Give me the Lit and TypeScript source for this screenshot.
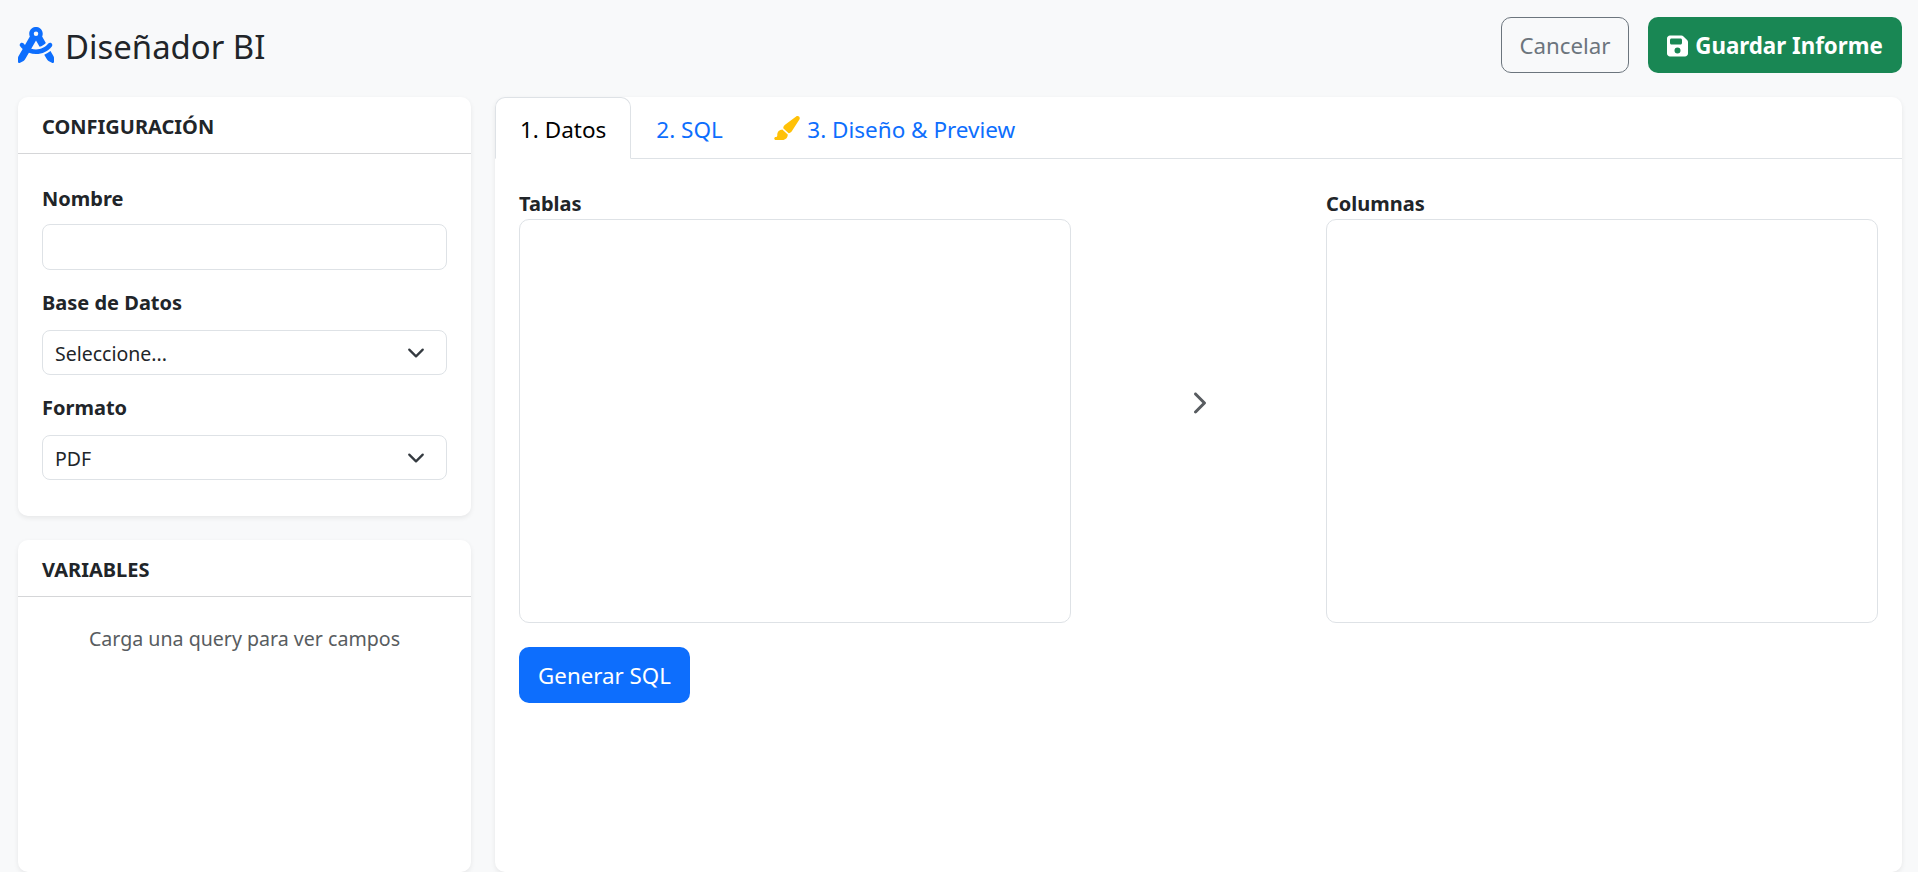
import { LitElement, css, html } from 'lit';
import { customElement } from 'lit/decorators.js';

const logoIcon = html`<svg class="logo" viewBox="0 0 512 512" fill="currentColor"><path d="M352 96c0 14.3-3.1 27.9-8.7 40.2L396 227.4c-23.7 25.3-54.2 44.1-88.5 53.6L256 192h0 0l-68 117.5c21.5 6.8 44.3 10.5 68.1 10.5c70.7 0 133.8-32.7 174.9-84c11.1-13.8 31.2-16 45-5s16 31.2 5 45C428.1 341.8 347 384 256 384c-35.4 0-69.4-6.4-100.7-18.1L98.7 463.7C94 471.8 87 478.4 78.6 482.6L23.2 510.3c-5 2.5-10.9 2.2-15.6-.7S0 501.5 0 496V440.6c0-8.4 2.2-16.7 6.5-24.1l60-103.7C53.6 301.3 41.8 288.6 31 275c-11.1-13.8-8.8-33.9 5-45s33.9-8.8 45 5c5.7 7.1 11.8 13.8 18.2 20.1l69.4-119.9c-5.6-12.2-8.8-25.8-8.8-40.2c0-53 43-96 96-96s96 43 96 96zm21 297.9c32.6-12.8 62.5-30.8 88.9-52.9l43.7 75.5c4.2 7.3 6.5 15.6 6.5 24.1V496c0 5.5-2.9 10.7-7.6 13.6s-10.6 3.2-15.6 .7l-55.4-27.7c-8.4-4.2-15.4-10.8-20.1-18.9L373 393.9zM256 128a32 32 0 1 0 0-64 32 32 0 1 0 0 64z"/></svg>`;

const saveIcon = html`<svg class="save" viewBox="0 0 448 512" fill="currentColor"><path d="M64 32C28.7 32 0 60.7 0 96V416c0 35.3 28.7 64 64 64H384c35.3 0 64-28.7 64-64V173.3c0-17-6.7-33.3-18.7-45.3L352 50.7C340 38.7 323.7 32 306.7 32H64zm0 96c0-17.7 14.3-32 32-32H288c17.7 0 32 14.3 32 32v64c0 17.7-14.3 32-32 32H96c-17.7 0-32-14.3-32-32V128zM224 288a64 64 0 1 1 0 128 64 64 0 1 1 0-128z"/></svg>`;

const brushIcon = html`<svg class="brush" viewBox="32 0 544 512" fill="currentColor"><path d="M339.3 367.1c27.3-3.9 51.9-19.4 67.2-42.9L568.2 74.1c12.6-19.5 9.4-45.3-7.6-61.2S517.7-4.4 499.1 9.6L262.4 187.2c-24 18-38.2 46.1-38.4 76.1L339.3 367.1zm-19.6 25.4l-116-104.4C143.9 290.3 96 339.6 96 400c0 3.9 .2 7.8 .6 11.6C98.4 429.1 86.4 448 68.8 448H64c-17.7 0-32 14.3-32 32s14.3 32 32 32H208c61.9 0 112-50.1 112-112c0-2.5-.1-5-.2-7.5z"/></svg>`;

const chevronIcon = html`<svg class="chevron" viewBox="0 0 320 512" fill="currentColor"><path d="M310.6 233.4c12.5 12.5 12.5 32.8 0 45.3l-192 192c-12.5 12.5-32.8 12.5-45.3 0s-12.5-32.8 0-45.3L242.7 256 73.4 86.6c-12.5-12.5-12.5-32.8 0-45.3s32.8-12.5 45.3 0l192 192z"/></svg>`;

const caret = html`<svg class="caret" viewBox="0 0 16 16" fill="none" stroke="#343a40" stroke-linecap="round" stroke-linejoin="round" stroke-width="2"><path d="m2 5 6 6 6-6"/></svg>`;

@customElement('app-root')
export class AppRoot extends LitElement {
  static styles = css`
    :host {
      display: flex;
      flex-direction: column;
      height: 100vh;
      overflow: hidden;
      box-sizing: border-box;
      padding: 17px 16px 0 18px;
      background: #f8f9fa;
      color: #212529;
      font-family: 'Noto Sans', 'Open Sans', sans-serif;
      font-size: 20px;
      line-height: 30px;
    }

    * {
      box-sizing: border-box;
    }

    .topbar {
      display: flex;
      align-items: center;
      justify-content: space-between;
      margin-bottom: 24px;
    }

    .brand {
      display: flex;
      align-items: center;
      gap: 11px;
      margin: 0;
      font-size: 32.9px;
      font-weight: 400;
      line-height: 40px;
    }

    .brand span {
      padding-top: 4px;
    }

    .logo {
      width: 36px;
      height: 36px;
      color: #0d6efd;
    }

    .actions {
      display: flex;
      gap: 19px;
    }

    .btn {
      display: inline-flex;
      align-items: center;
      justify-content: center;
      height: 56px;
      border-radius: 10px;
      border: 1px solid transparent;
      font: inherit;
      font-size: 22.3px;
      padding: 2px 0 0;
    }

    .btn-cancel {
      width: 128px;
      background: transparent;
      border-color: #6c757d;
      color: #6c757d;
    }

    .btn-save {
      width: 254px;
      gap: 7px;
      background: #198754;
      color: #fff;
      font-weight: 700;
    }

    .save {
      width: 21px;
      height: 24px;
    }

    .btn-primary {
      width: 171px;
      margin-top: 24px;
      background: #0d6efd;
      color: #fff;
    }

    .workspace {
      flex: 1;
      min-height: 0;
      display: grid;
      grid-template-columns: 453px 1fr;
      gap: 24px;
    }

    .side {
      display: flex;
      flex-direction: column;
      gap: 24px;
      min-height: 0;
    }

    .card {
      background: #fff;
      border-radius: 10px;
      box-shadow: 0 2px 5px rgba(0, 0, 0, 0.075);
    }

    .card-header {
      height: 57px;
      display: flex;
      align-items: center;
      padding: 4px 24px 0;
      border-bottom: 1px solid #d5d6d8;
      font-weight: 700;
    }

    .config-body {
      display: flex;
      flex-direction: column;
      padding: 30px 24px 36px;
    }

    .field-label {
      display: block;
      font-weight: 700;
    }

    .config-body .field-label {
      margin-bottom: 11px;
    }

    .config-body .field-label:first-child {
      margin-bottom: 10px;
    }

    .control {
      width: 100%;
      height: 46px;
      margin-bottom: 18px;
      padding: 0 12px;
      border: 1px solid #dee2e6;
      border-radius: 8px;
      background: #fff;
      color: #212529;
      font: inherit;
      font-size: 19.5px;
      display: flex;
      align-items: center;
      justify-content: space-between;
    }

    .control + .field-label + .select {
      margin-top: 1px;
    }

    .control span {
      padding-top: 2px;
    }

    .control.select {
      height: 45px;
    }

    .control.last {
      margin-top: 0;
      margin-bottom: 0;
    }

    .caret {
      width: 18px;
      height: 18px;
      margin-right: 9px;
    }

    .variables {
      flex: 1;
    }

    .empty {
      padding: 27px 24px;
      text-align: center;
      color: #585c60;
      font-size: 19.6px;
    }

    .main {
      display: flex;
      flex-direction: column;
    }

    .tabs {
      display: flex;
      height: 62px;
      border-bottom: 1px solid #dee2e6;
    }

    .tab {
      display: flex;
      align-items: center;
      gap: 7px;
      height: 62px;
      padding: 3px 24px 0;
      border: 1px solid transparent;
      border-radius: 10px 10px 0 0;
      background: transparent;
      color: #0d6efd;
      font: inherit;
      font-size: 22.5px;
    }

    .tab.active {
      background: #fff;
      border-color: #dee2e6 #dee2e6 #fff;
      color: #000;
    }

    .brush {
      width: 26px;
      height: 24px;
      margin: -3px 0 0 1.5px;
      color: #ffc107;
    }

    .pane {
      padding: 30px 24px 24px;
    }

    .lists {
      display: grid;
      grid-template-columns: 552px 1fr 552px;
    }

    .listbox {
      height: 404px;
      border: 1px solid #dee2e6;
      border-radius: 10px;
    }

    .arrow {
      display: flex;
      align-items: center;
      justify-content: center;
      color: #585c60;
      padding-bottom: 7px;
    }

    .chevron {
      width: 15px;
      height: 24px;
    }
  `;

  render() {
    return html`
      <header class="topbar">
        <h1 class="brand">${logoIcon}<span>Diseñador BI</span></h1>
        <div class="actions">
          <button class="btn btn-cancel">Cancelar</button>
          <button class="btn btn-save">${saveIcon}Guardar Informe</button>
        </div>
      </header>

      <div class="workspace">
        <aside class="side">
          <section class="card">
            <div class="card-header">CONFIGURACIÓN</div>
            <div class="config-body">
              <label class="field-label">Nombre</label>
              <input class="control" type="text" />
              <label class="field-label">Base de Datos</label>
              <div class="control select"><span>Seleccione...</span>${caret}</div>
              <label class="field-label">Formato</label>
              <div class="control select last"><span>PDF</span>${caret}</div>
            </div>
          </section>

          <section class="card variables">
            <div class="card-header">VARIABLES</div>
            <div class="empty">Carga una query para ver campos</div>
          </section>
        </aside>

        <main class="card main">
          <nav class="tabs">
            <button class="tab active">1. Datos</button>
            <button class="tab">2. SQL</button>
            <button class="tab">${brushIcon}3. Diseño &amp; Preview</button>
          </nav>
          <div class="pane">
            <div class="lists">
              <div>
                <label class="field-label">Tablas</label>
                <div class="listbox"></div>
              </div>
              <div class="arrow">${chevronIcon}</div>
              <div>
                <label class="field-label">Columnas</label>
                <div class="listbox"></div>
              </div>
            </div>
            <button class="btn btn-primary">Generar SQL</button>
          </div>
        </main>
      </div>
    `;
  }
}
